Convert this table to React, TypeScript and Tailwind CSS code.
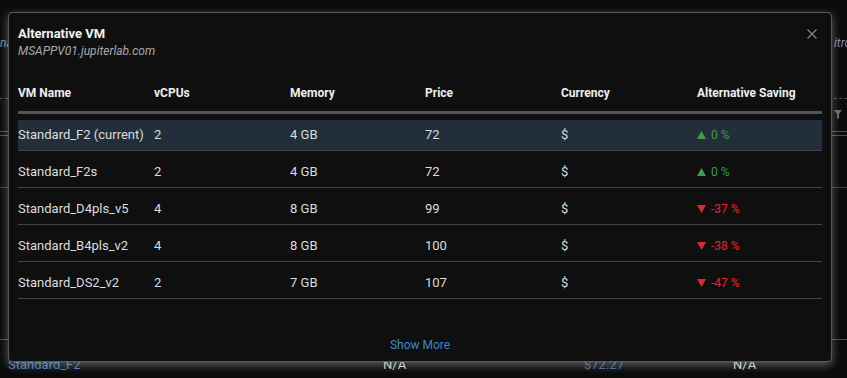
import React from "react";

type Row = {
  name: string;
  cpu: string;
  mem: string;
  price: string;
  saving: string;
  up: boolean;
  current?: boolean;
};

const rows: Row[] = [
  { name: "Standard_F2 (current)", cpu: "2", mem: "4 GB", price: "72", saving: "0 %", up: true, current: true },
  { name: "Standard_F2s", cpu: "2", mem: "4 GB", price: "72", saving: "0 %", up: true },
  { name: "Standard_D4pls_v5", cpu: "4", mem: "8 GB", price: "99", saving: "-37 %", up: false },
  { name: "Standard_B4pls_v2", cpu: "4", mem: "8 GB", price: "100", saving: "-38 %", up: false },
  { name: "Standard_DS2_v2", cpu: "2", mem: "7 GB", price: "107", saving: "-47 %", up: false },
];

function Triangle({ up }: { up: boolean }) {
  return (
    <svg width="9" height="8" viewBox="0 0 9 8" className="shrink-0">
      {up ? (
        <polygon points="4.5,0 9,8 0,8" fill="#3f9a4c" />
      ) : (
        <polygon points="0,0 9,0 4.5,8" fill="#e0262f" />
      )}
    </svg>
  );
}

function FilterIcon() {
  return (
    <svg width="8" height="9" viewBox="0 0 8 9">
      <polygon points="0,0 8,0 5,4 5,9 3,8 3,4" fill="#6a6a6a" />
    </svg>
  );
}

export default function App() {
  const cols = "grid grid-cols-[136px_136px_135px_136px_136px_1fr]";
  return (
    <div
      className="relative w-[847px] h-[378px] overflow-hidden bg-[#0b0b0b]"
      style={{ fontFamily: "Roboto, 'Liberation Sans', sans-serif" }}
    >
      {/* dimmed background page */}
      <div className="h-[36px]" />
      <div className="grid grid-cols-[834px_1fr] h-[14px] leading-[14px] text-[12px] italic text-[#8a8aa0] whitespace-nowrap overflow-hidden">
        <span>na</span>
        <span className="overflow-hidden">itro</span>
      </div>
      <div className="h-[48px]" />
      <div className="border-t border-dashed border-[#4a4a4a]" />
      <div className="h-[11px]" />
      <div className="flex justify-end h-[9px] pr-[5px]">
        <FilterIcon />
      </div>
      <div className="h-[12px]" />
      <div className="border-t border-[#4d4d4d]" />
      <div className="h-[3px]" />
      <div className="border-t border-[#4d4d4d]" />
      <div className="h-[51px]" />
      <div className="border-t border-[#3d3d3d]" />
      <div className="h-[151px]" />
      <div className="border-t border-[#4d4d4d]" />
      <div className="h-[17px]" />
      <div className="grid grid-cols-[375px_201px_149px_1fr] pl-[8px] h-[16px] leading-[16px] text-[13px] whitespace-nowrap">
        <span className="text-[#3f74b5]">Standard_F2</span>
        <span className="text-[#c8c8c8]">N/A</span>
        <span className="text-[#34639a]">$72.27</span>
        <span className="text-[#c8c8c8]">N/A</span>
      </div>

      {/* modal */}
      <div className="absolute left-[8px] top-[12px] w-[824px] h-[350px] rounded-[4px] bg-[#0f0f0f] border border-[#5a5a5a] shadow-[0_3px_10px_rgba(255,255,255,0.35)] px-[9px]">
        <div className="flex items-start justify-between pt-[12px]">
          <div>
            <div className="text-[13px] leading-[18px] font-bold text-[#f2f2f2]">Alternative VM</div>
            <div className="text-[12px] leading-[16px] italic text-[#a9a9a9]">MSAPPV01.jupiterlab.com</div>
          </div>
          <button className="mt-[4px] mr-[5px] w-[10px] h-[10px] flex items-center justify-center">
            <svg width="10" height="10" viewBox="0 0 10 10">
              <path d="M0.5 0.5 L9.5 9.5 M9.5 0.5 L0.5 9.5" stroke="#8a8a8a" strokeWidth="1.1" />
            </svg>
          </button>
        </div>

        <div className={`${cols} mt-[26px] pb-[10px] border-b-[3px] border-[#555555] text-[12px] leading-[16px] font-bold text-[#eeeeee]`}>
          <div>VM Name</div>
          <div>vCPUs</div>
          <div>Memory</div>
          <div>Price</div>
          <div>Currency</div>
          <div>Alternative Saving</div>
        </div>

        {rows.map((r) => (
          <div key={r.name} className="pt-[6px] border-b border-[#414141]">
            <div
              className={`${cols} h-[30px] items-center text-[13px] leading-[16px] text-[#dddddd] whitespace-nowrap ${
                r.current ? "bg-[#222f3b]" : ""
              }`}
            >
              <div>{r.name}</div>
              <div>{r.cpu}</div>
              <div>{r.mem}</div>
              <div>{r.price}</div>
              <div>$</div>
              <div className="flex items-center">
                <Triangle up={r.up} />
                <span className={`ml-[5px] text-[12px] ${r.up ? "text-[#3f9a4c]" : "text-[#e0262f]"}`}>
                  {r.saving}
                </span>
              </div>
            </div>
          </div>
        ))}

        <div className="mt-[38px] text-center text-[12px] leading-[16px] text-[#3d85c6]">Show More</div>
      </div>
    </div>
  );
}
